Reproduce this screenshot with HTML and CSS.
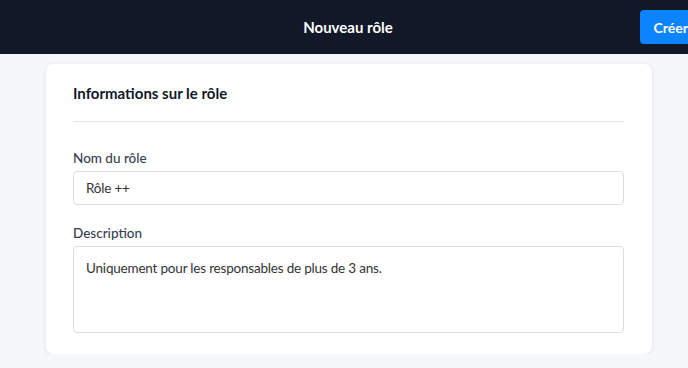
FILE: index.html
```html
<!DOCTYPE html>
<html lang="fr">
<head>
  <meta charset="UTF-8">
  <title>Nouveau rôle</title>
  <link rel="stylesheet" href="styles.css">
</head>
<body>

  <header class="topbar">
    <div></div>
    <h1 class="topbar-title">Nouveau rôle</h1>
    <div class="topbar-actions">
      <button class="create">Créer</button>
    </div>
  </header>

  <main class="page">
    <section class="card">
      <h2 class="card-title">Informations sur le rôle</h2>

      <div class="field">
        <label class="label" for="name">Nom du rôle</label>
        <input class="input" id="name" type="text" value="Rôle ++">
      </div>

      <div class="field">
        <label class="label" for="desc">Description</label>
        <textarea class="input textarea" id="desc">Uniquement pour les responsables de plus de 3 ans.</textarea>
      </div>
    </section>
  </main>

</body>
</html>
```

FILE: styles.css
```css
body {
  margin: 0;
  font-family: Lato, "Noto Sans", sans-serif;
  background: #f6f7f9;
  overflow: hidden;
}

.topbar {
  height: 54px;
  background: #111827;
  display: grid;
  grid-template-columns: 1fr auto 1fr;
  align-items: center;
  padding-left: 8px;
  overflow: hidden;
}

.topbar-title {
  margin: 0;
  color: #fff;
  font-size: 15px;
  font-weight: 700;
}

.topbar-actions {
  display: flex;
  justify-content: flex-end;
  margin-right: -14px;
}

.create {
  height: 34px;
  padding: 0 14px;
  border: none;
  border-radius: 4px;
  background: #0a84ff;
  color: #fff;
  font-family: inherit;
  font-size: 14px;
  font-weight: 700;
  cursor: pointer;
}

.page {
  padding: 10px 36px 0 46px;
}

.card {
  background: #fff;
  border-radius: 8px;
  box-shadow: 0 1px 4px rgba(33, 33, 52, 0.1);
  padding: 18px 28px 21px 27px;
}

.card-title {
  margin: 0;
  padding-bottom: 17px;
  border-bottom: 1px solid #e4e4ea;
  font-size: 15px;
  line-height: 22px;
  font-weight: 700;
  color: #111827;
}

.field {
  display: flex;
  flex-direction: column;
  margin-top: 26px;
}

.field + .field {
  margin-top: 18px;
}

.label {
  font-size: 13.5px;
  line-height: 20px;
  font-weight: 500;
  color: #374151;
  margin-bottom: 3px;
}

.input {
  box-sizing: border-box;
  height: 34px;
  padding: 0 12px;
  border: 1px solid #dcdce4;
  border-radius: 4px;
  font-family: inherit;
  font-size: 13.5px;
  letter-spacing: -0.2px;
  color: #333;
  background: #fff;
}

.textarea {
  height: 87px;
  padding-top: 11px;
  line-height: 20px;
  resize: none;
}
```
